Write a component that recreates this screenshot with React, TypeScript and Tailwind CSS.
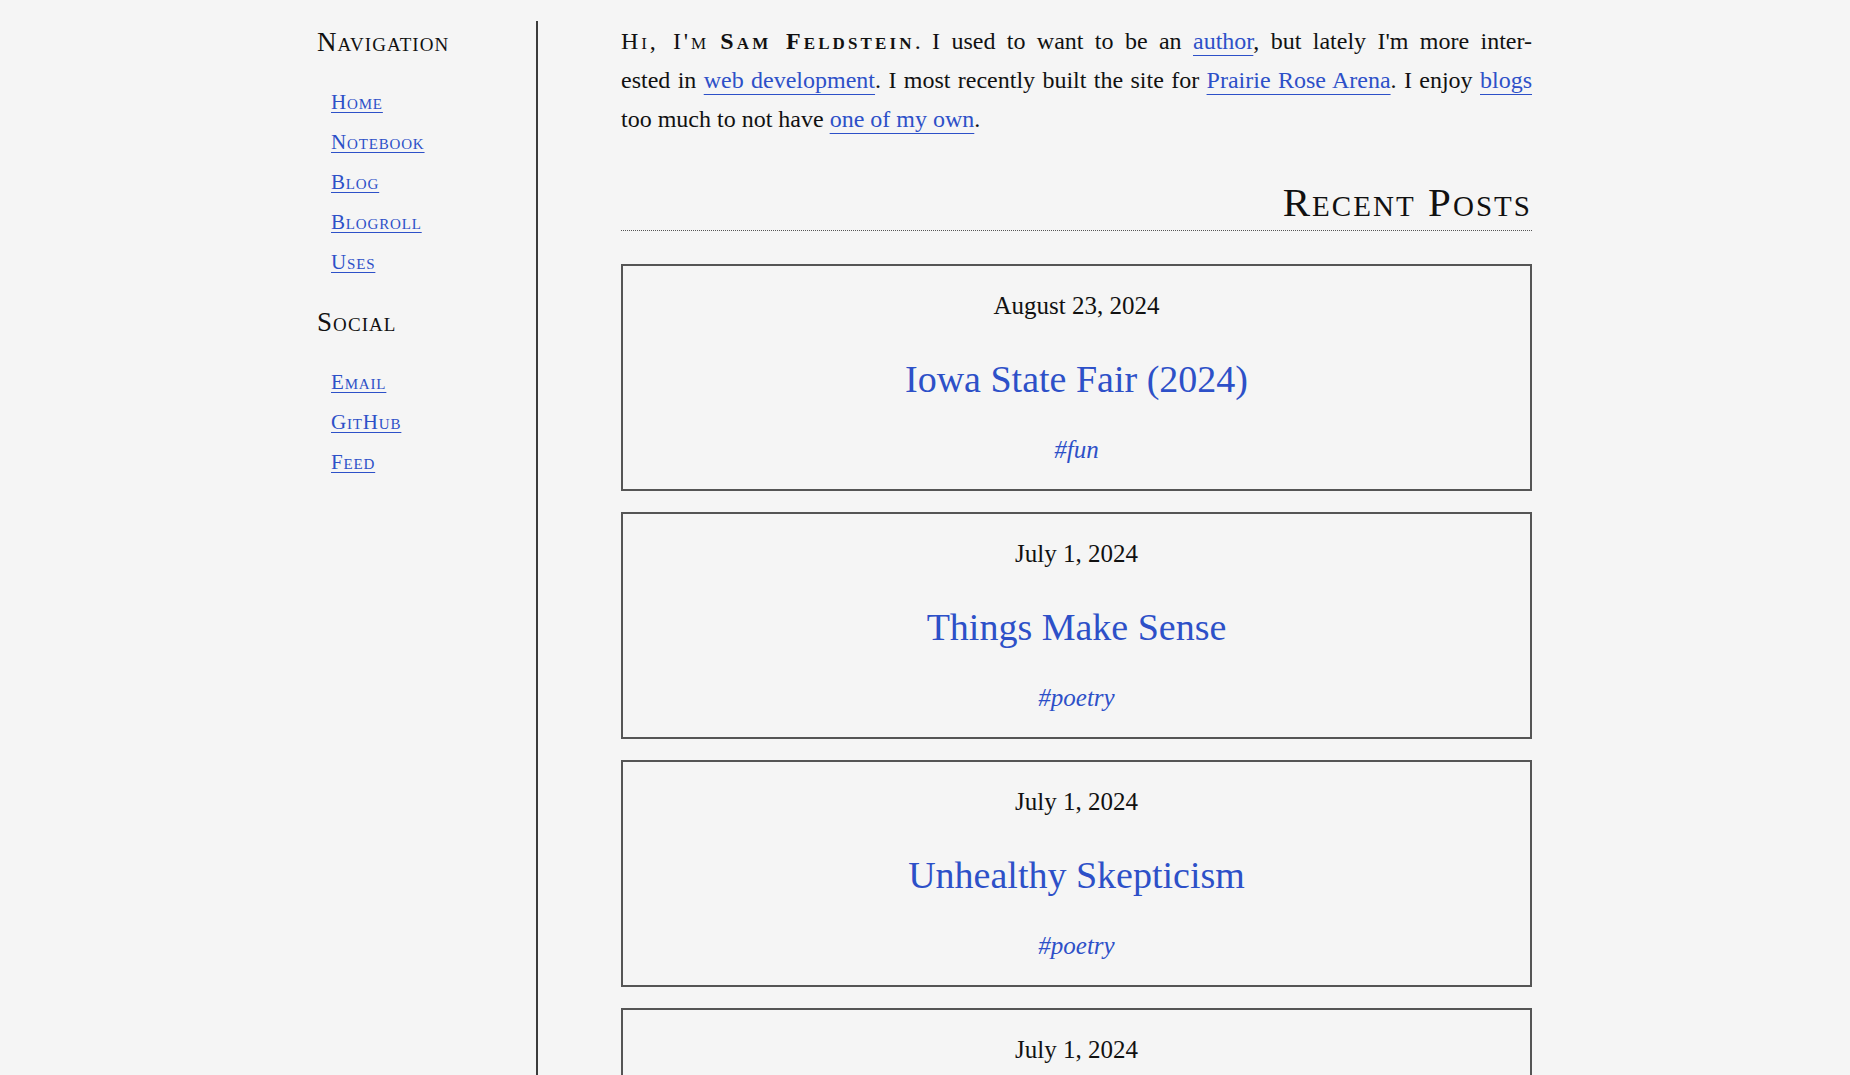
import React from "react";

const LINK = "text-[#2d50c8] underline decoration-1 underline-offset-[6px]";

function NavLink({ children }: { children: React.ReactNode }) {
  return (
    <li className="text-[21px] leading-[40px]">
      <a href="#" className="text-[#2d50c8] underline decoration-1 underline-offset-[3px] [font-variant:small-caps] tracking-[0.04em]">
        {children}
      </a>
    </li>
  );
}

type Post = { date: string; title: string; tag: string };

const posts: Post[] = [
  { date: "August 23, 2024", title: "Iowa State Fair (2024)", tag: "#fun" },
  { date: "July 1, 2024", title: "Things Make Sense", tag: "#poetry" },
  { date: "July 1, 2024", title: "Unhealthy Skepticism", tag: "#poetry" },
  { date: "July 1, 2024", title: "Summer Evening", tag: "#poetry" },
];

function PostCard({ post }: { post: Post }) {
  return (
    <a href="#" className="block border-2 border-[#555] pt-[25px] pb-[24px] text-center">
      <div className="text-[25px] leading-[30px] text-[#111]">{post.date}</div>
      <div className="mt-[35px] text-[38px] leading-[46px] text-[#2d50c8]">{post.title}</div>
      <div className="mt-[33px] text-[25px] leading-[30px] italic text-[#2d50c8]">{post.tag}</div>
    </a>
  );
}

export default function App() {
  return (
    <div className="min-h-screen bg-[#f5f5f5] text-[#111] font-['Liberation_Serif',serif]">
      <div className="mx-auto flex w-[1216px] pt-[21px]">
        <aside className="w-[221px] shrink-0 border-r-2 border-[#3c3c3c] pt-[6px] min-h-[1100px]">
          <h2 className="text-[27px] leading-[30px] [font-variant:small-caps] tracking-[0.04em]">Navigation</h2>
          <ul className="mt-[25px] pl-[14px]">
            <NavLink>Home</NavLink>
            <NavLink>Notebook</NavLink>
            <NavLink>Blog</NavLink>
            <NavLink>Blogroll</NavLink>
            <NavLink>Uses</NavLink>
          </ul>
          <h2 className="mt-[25px] text-[27px] leading-[30px] [font-variant:small-caps] tracking-[0.04em]">Social</h2>
          <ul className="mt-[25px] pl-[14px]">
            <NavLink>Email</NavLink>
            <NavLink>GitHub</NavLink>
            <NavLink>Feed</NavLink>
          </ul>
        </aside>
        <main className="ml-[83px] w-[911px] pt-[1px]">
          <p className="text-[24px] leading-[39px]">
            <span className="block text-justify [text-align-last:justify]">
              <span className="[font-variant:small-caps] tracking-[0.12em]">Hi, I'm</span>{" "}
              <strong className="font-bold [font-variant:small-caps] tracking-[0.13em]">Sam Feldstein</strong>. I used to want to be an{" "}
              <a href="#" className={LINK}>author</a>, but lately I'm more inter-
            </span>
            <span className="block text-justify [text-align-last:justify]">
              ested in <a href="#" className={LINK}>web development</a>. I most recently built the site for{" "}
              <a href="#" className={LINK}>Prairie Rose Arena</a>. I enjoy <a href="#" className={LINK}>blogs</a>
            </span>
            <span className="block">
              too much to not have <a href="#" className={LINK}>one of my own</a>.
            </span>
          </p>
          <h2 className="mt-[39px] border-b border-dotted border-[#555] pb-[4px] text-right text-[41px] leading-[48px] [font-variant:small-caps] tracking-[0.05em]">
            Recent Posts
          </h2>
          <div className="mt-[33px] flex flex-col gap-[21px] pb-10">
            {posts.map((p, i) => (
              <PostCard key={i} post={p} />
            ))}
          </div>
        </main>
      </div>
    </div>
  );
}
